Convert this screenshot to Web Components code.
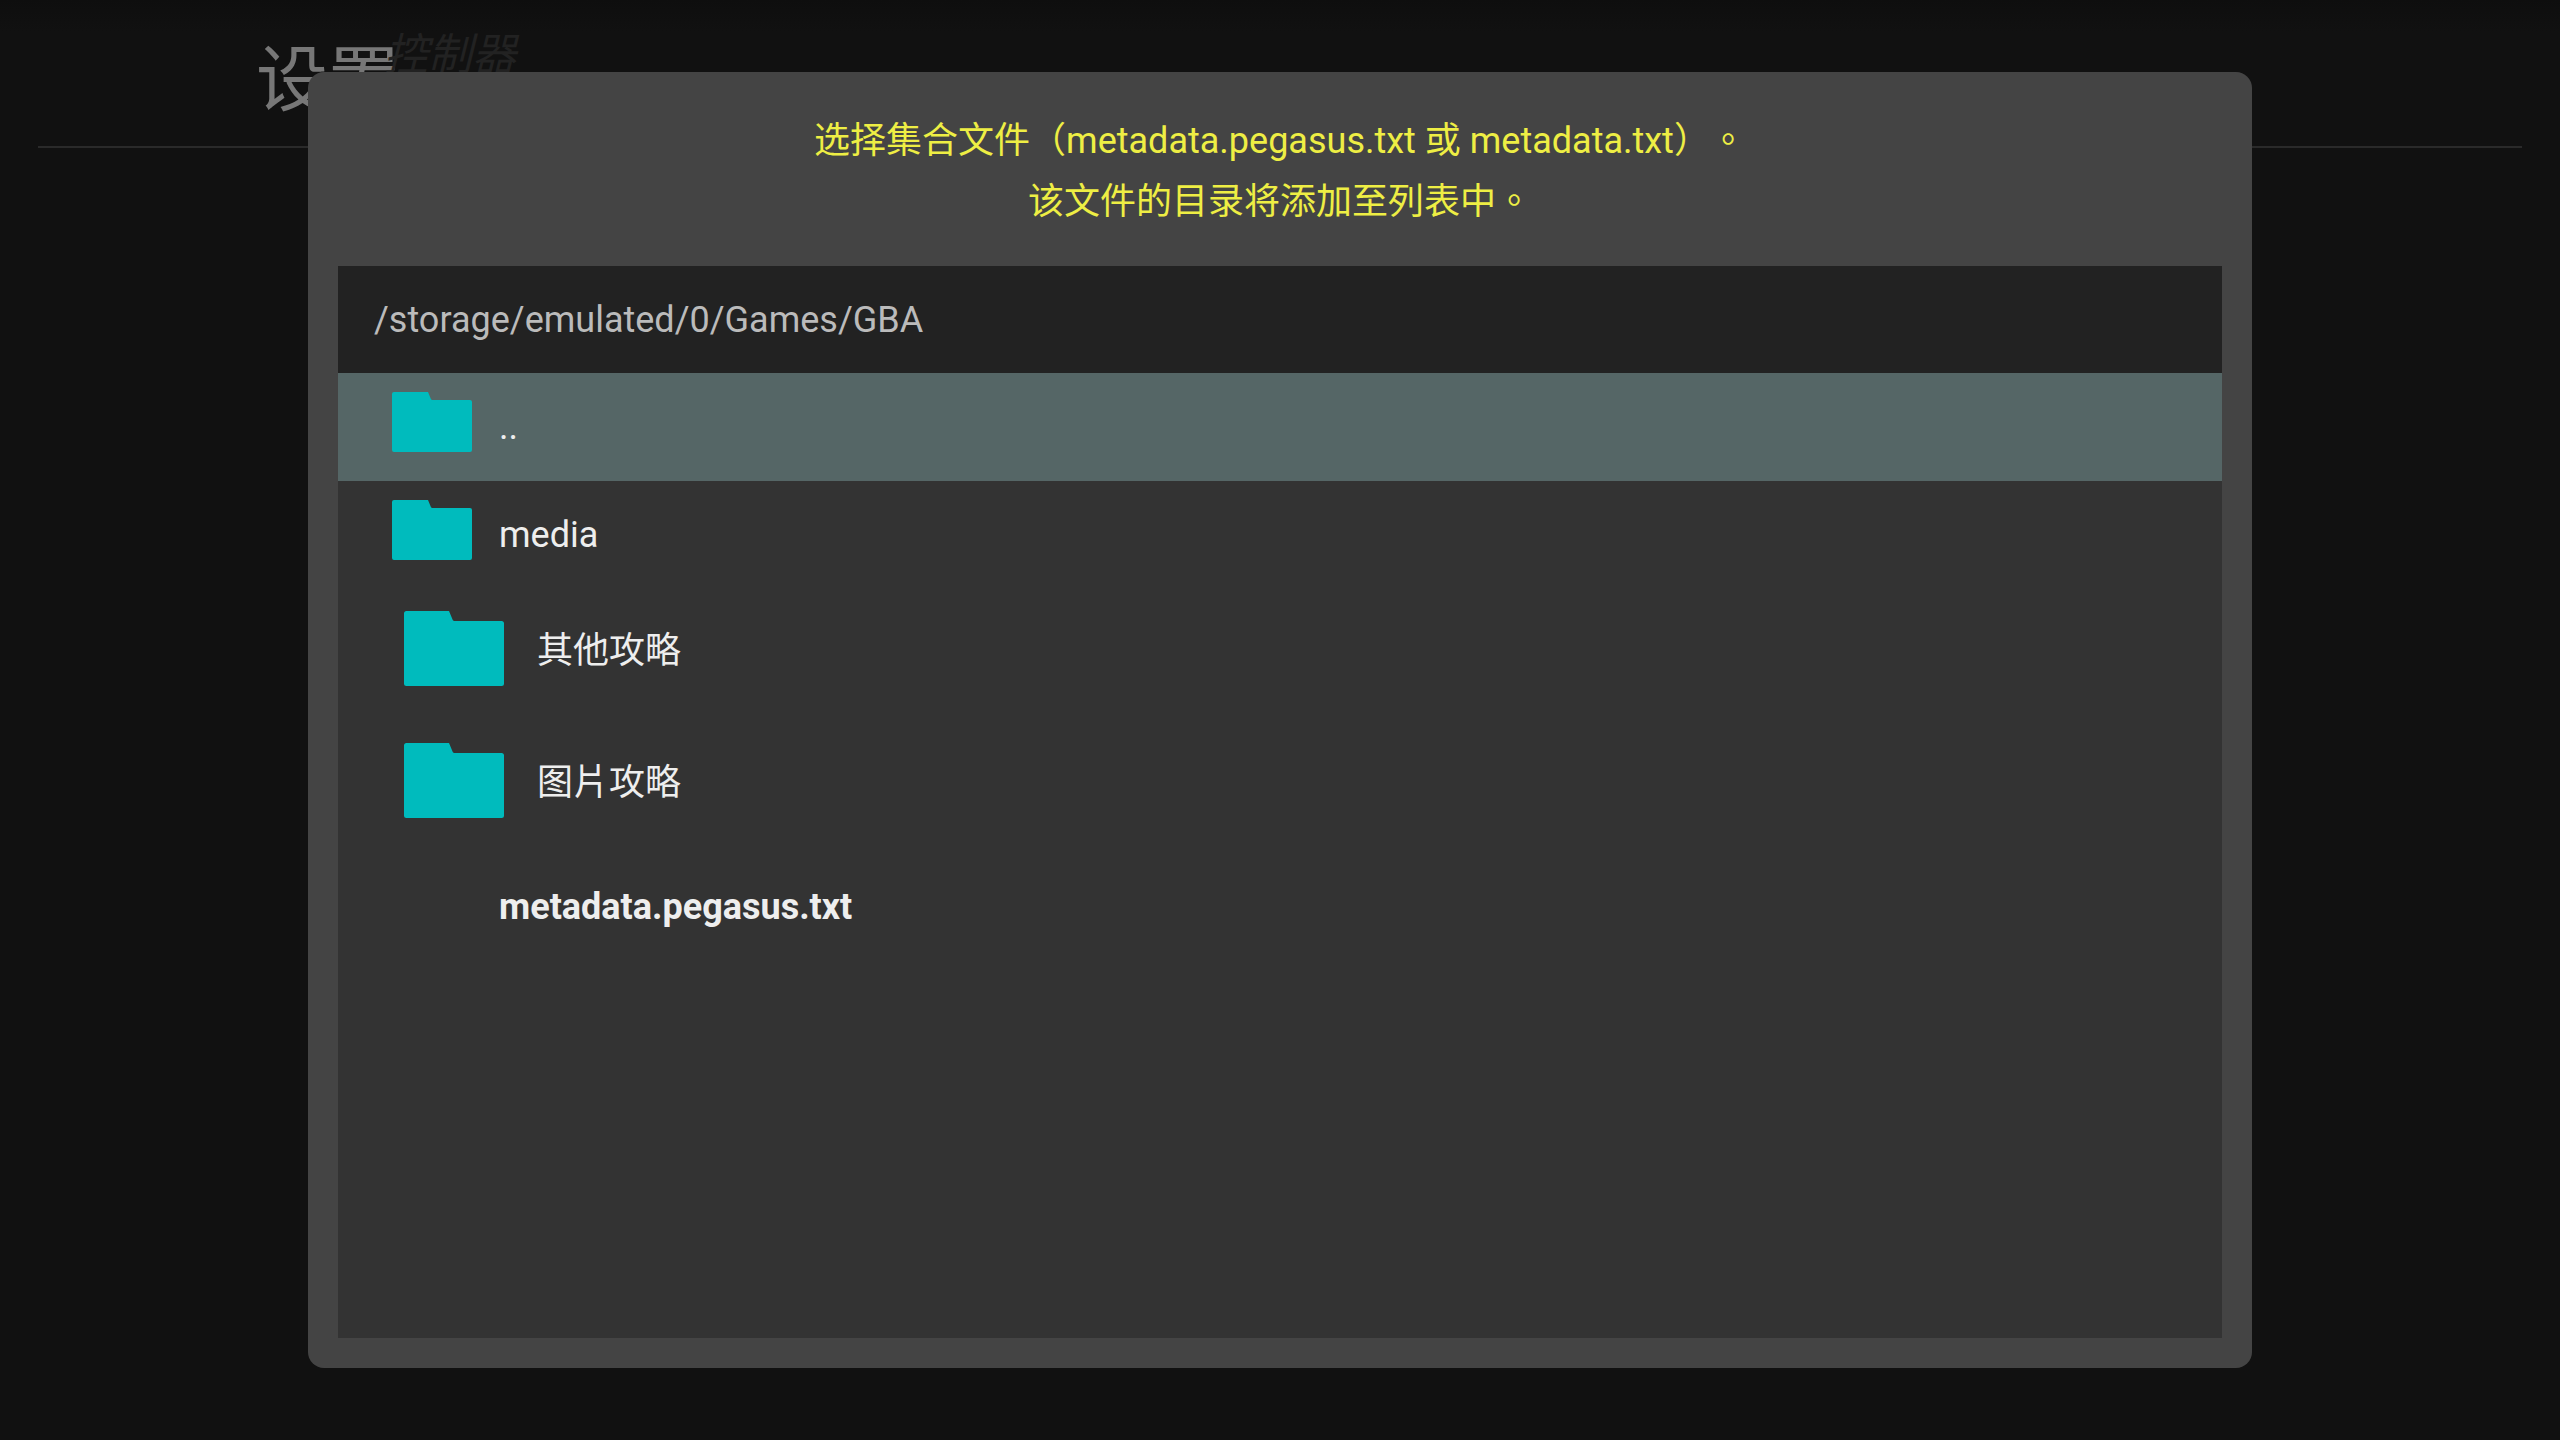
<!DOCTYPE html>
<html lang="zh-Hant">
<head>
<meta charset="utf-8">
<title>设置</title>
<style>
html, body { margin: 0; height: 100%; background: #111; }
body { font-family: Roboto, "Noto Sans CJK TC", sans-serif; font-size: 36px; color: #eee; text-spacing-trim: space-all; }
</style>
</head>
<body>
<settings-screen>
  <span slot="title">设置</span>
  <span slot="tab">控制器</span>
</settings-screen>
<file-dialog>
  <span slot="message">选择集合文件（metadata.pegasus.txt 或 metadata.txt）。</span>
  <span slot="message">该文件的目录将添加至列表中。</span>
  <span slot="path">/storage/emulated/0/Games/GBA</span>
  <file-row kind="folder" selected>..</file-row>
  <file-row kind="folder">media</file-row>
  <file-row kind="folder" tall>其他攻略</file-row>
  <file-row kind="folder" tall>图片攻略</file-row>
  <file-row kind="file">metadata.pegasus.txt</file-row>
</file-dialog>
<script>
class SettingsScreen extends HTMLElement {
  constructor() {
    super();
    this.attachShadow({ mode: "open" }).innerHTML = `
      <style>
        :host { display: block; height: 100vh; box-sizing: border-box; padding: 0 38px;
                background: linear-gradient(#0e0e0e, #111 32px); }
        header { display: flex; align-items: flex-start; height: 146px; padding-left: 218px;
                 border-bottom: 2px solid #2a2a2a; }
        h1 { margin: 0; padding-top: 29px; font-size: 72px; line-height: 104px; font-weight: 400; color: #777; }
        p { margin: 0 0 0 -16px; padding-top: 23px; font-size: 44px; line-height: 64px; font-style: italic; color: #222; }
      </style>
      <header><h1><slot name="title"></slot></h1><p><slot name="tab"></slot></p></header>`;
  }
}
class FileDialog extends HTMLElement {
  constructor() {
    super();
    this.attachShadow({ mode: "open" }).innerHTML = `
      <style>
        :host { position: fixed; inset: 0; display: flex; align-items: center; justify-content: center; }
        section { display: flex; flex-direction: column; box-sizing: border-box; width: 135vh; max-width: 100vw;
                  height: 90vh; padding: 0 30px 30px; border-radius: 16px; background: #444; }
        .message { display: flex; flex-direction: column; align-items: center; padding: 39px 0 33px;
                   line-height: 61px; color: #ee4; }
        .path { padding: 2px 36px 0; line-height: 105px; background: #222; color: #bbb; }
        .list { flex: 1; background: #333; overflow: hidden; }
      </style>
      <section role="dialog">
        <div class="message"><slot name="message"></slot></div>
        <div class="path"><slot name="path"></slot></div>
        <div class="list"><slot></slot></div>
      </section>`;
  }
}
class FolderIcon extends HTMLElement {
  constructor() {
    super();
    this.attachShadow({ mode: "open" }).innerHTML = `
      <style>
        :host { display: block; }
        svg { display: block; width: 100%; height: 100%; }
      </style>
      <svg viewBox="0 0 80 60" aria-hidden="true">
        <path fill="#00bbbd" d="M2 0H36L39 7.2Q39.4 8 40.4 8H78Q80 8 80 10V58Q80 60 78 60H2Q0 60 0 58V2Q0 0 2 0Z"/>
      </svg>`;
  }
}
class FileRow extends HTMLElement {
  constructor() {
    super();
    this.attachShadow({ mode: "open" }).innerHTML = `
      <style>
        :host { display: block; --row: 108px; --inset: 54px; --icon-w: 80px; --icon-h: 60px; --gap: 27px;
                --icon-lift: 10px; --text-lift: 0; }
        :host([tall]) { --row: 132px; --inset: 66px; --icon-w: 100px; --icon-h: 75px; --gap: 33px;
                        --icon-lift: 14px; --text-lift: 16px; }
        :host([selected]) { background: #566; }
        button { display: flex; align-items: center; gap: var(--gap); width: 100%; height: var(--row);
                 padding: 0 var(--inset); border: 0; background: none; color: inherit; font: inherit; text-align: left; }
        folder-icon { width: var(--icon-w); height: var(--icon-h); margin-bottom: var(--icon-lift); }
        span { margin-bottom: var(--text-lift); }
        :host([kind="file"]) folder-icon { visibility: hidden; }
        :host([kind="file"]) button { font-weight: 700; }
      </style>
      <button type="button"><folder-icon></folder-icon><span><slot></slot></span></button>`;
  }
}
customElements.define("folder-icon", FolderIcon);
customElements.define("file-row", FileRow);
customElements.define("settings-screen", SettingsScreen);
customElements.define("file-dialog", FileDialog);
</script>
</body>
</html>
